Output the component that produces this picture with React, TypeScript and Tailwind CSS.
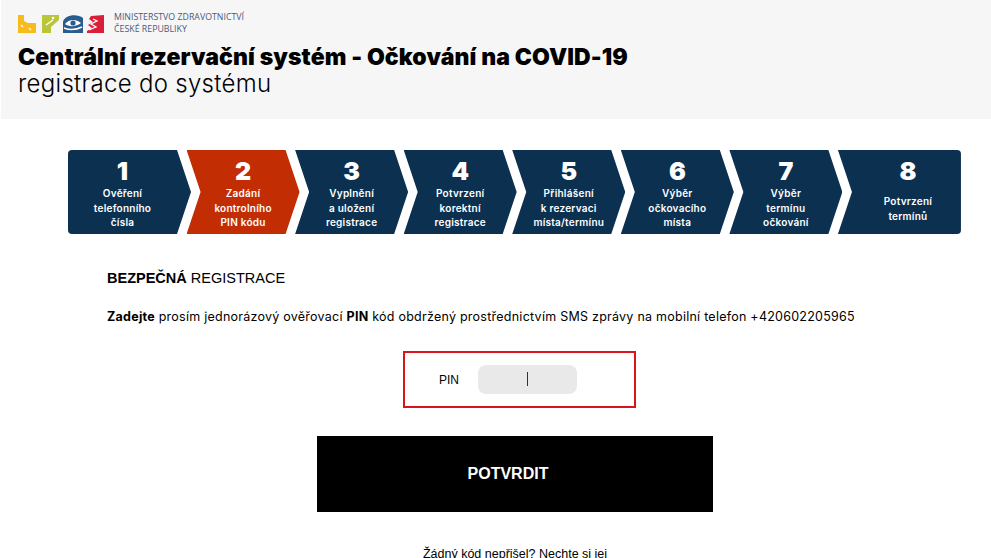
const steps = [
  { n: '1', lines: ['Ověření', 'telefonního', 'čísla'], first: true },
  { n: '2', lines: ['Zadání', 'kontrolního', 'PIN kódu'], active: true },
  { n: '3', lines: ['Vyplnění', 'a uložení', 'registrace'] },
  { n: '4', lines: ['Potvrzení', 'korektní', 'registrace'] },
  { n: '5', lines: ['Přihlášení', 'k rezervaci', 'místa/termínu'] },
  { n: '6', lines: ['Výběr', 'očkovacího', 'místa'] },
  { n: '7', lines: ['Výběr', 'termínu', 'očkování'] },
  { n: '8', lines: ['Potvrzení', 'termínů'], last: true },
];

function Logo() {
  return (
    <svg width="87" height="19" viewBox="0 0 87 19" className="shrink-0">
      <path d="M0 1h6v6l4 2h8v10H0z" fill="#f7bb1e" />
      <path d="M3 11l2 2M11 14l2 2" stroke="#fff" strokeWidth="1.2" />
      <path d="M24 1h17v5L33 13v6h-9z" fill="#b9c63a" />
      <path d="M28 11l7-5" stroke="#fff" strokeWidth="1.2" />
      <circle cx="35" cy="4" r="1.3" fill="#fff" />
      <path d="M45 8C46 1 59 -1 65 4v15H45z" fill="#2b5c8e" />
      <path d="M47 10c4-5 11-5 16-1-5 4-12 4-16 1z" fill="#fff" />
      <circle cx="55" cy="9" r="2.6" fill="#2b5c8e" />
      <path d="M46 14c5 2 12 2 18-1" stroke="#fff" strokeWidth="1.4" fill="none" />
      <path d="M73 2l13-1v18H69v-2l5-3-4-3 5-3-4-3z" fill="#dc1f38" />
      <path d="M71 16l7-3-5-3 6-3-4-2" stroke="#fff" strokeWidth="1.3" fill="none" />
    </svg>
  );
}

function Step({ n, lines, first, last, active }: { n: string; lines: string[]; first?: boolean; last?: boolean; active?: boolean }) {
  const shape = first
    ? 'w-[123px] rounded-l-[4px] [clip-path:polygon(0_0,109px_0,100%_50%,109px_100%,0_100%)] pr-[14px]'
    : last
      ? 'w-[123px] rounded-r-[4px] -ml-[4.45px] [clip-path:polygon(0_0,100%_0,100%_100%,0_100%,14px_50%)] pl-[17px]'
      : 'w-[113px] -ml-[4.45px] [clip-path:polygon(0_0,99px_0,100%_50%,99px_100%,0_100%,14px_50%)] pl-[14px] pr-[14px]';
  return (
    <div className={`h-[84px] shrink-0 flex flex-col items-center text-white ${active ? 'bg-[#c32d04]' : 'bg-[#0b3050]'} ${shape}`}>
      <div className="mt-[6px] text-[25px] leading-[30px] font-black">{n}</div>
      <div className={`text-[10px] leading-[14.5px] font-semibold text-center whitespace-nowrap tracking-[0.25px] ${last ? 'mt-[8px]' : 'mt-0'}`}>
        {lines.map((l) => (
          <div key={l}>{l}</div>
        ))}
      </div>
    </div>
  );
}

export default function App() {
  return (
    <div className="h-[558px] w-[991px] overflow-hidden bg-white font-['Inter',sans-serif] text-black">
      {/* Header */}
      <div className="ml-[1px] h-[119px] bg-[#f6f6f7] pl-[17px] pt-[11px]">
        <div className="flex items-center gap-[9px]">
          <Logo />
          <div className="text-[8.8px] leading-[12px] text-[#4a5a7a] font-['Open_Sans',sans-serif] whitespace-nowrap">
            <div>MINISTERSTVO ZDRAVOTNICTVÍ</div>
            <div>ČESKÉ REPUBLIKY</div>
          </div>
        </div>
        <h1 className="mt-[8px] text-[23px] leading-[28px] font-black tracking-[0.1px] whitespace-nowrap">
          Centrální rezervační systém - Očkování na COVID-19
        </h1>
        <p className="text-[24px] leading-[25px] font-light tracking-[0.3px]">registrace do systému</p>
      </div>

      {/* Steps */}
      <div className="mt-[31px] pl-[68px] flex">
        {steps.map((s) => (
          <Step key={s.n} {...s} />
        ))}
      </div>

      {/* Body */}
      <div className="pl-[107px] pt-[34px]">
        <h2 className="text-[14.5px] leading-[20px] font-['Liberation_Sans',sans-serif]">
          <span className="font-bold">BEZPEČNÁ</span> REGISTRACE
        </h2>
        <p className="mt-[19px] text-[12.5px] leading-[20px] whitespace-nowrap tracking-[0.25px]">
          <b>Zadejte</b> prosím jednorázový ověřovací <b>PIN</b> kód obdržený prostřednictvím SMS zprávy na mobilní telefon +420602205965
        </p>
      </div>

      <div className="mt-[24px] ml-[403px] w-[233px] h-[57px] border-2 border-[#d8141c] flex items-center pl-[34px]">
        <label className="w-[39px] text-[12px] font-['Liberation_Sans',sans-serif]">PIN</label>
        <div className="w-[99px] h-[29px] -mt-[1px] rounded-lg bg-[#e9e9e9] flex items-center justify-center">
          <div className="w-px h-[14px] bg-[#333]" />
        </div>
      </div>

      <button className="mt-[28px] ml-[317px] w-[396px] h-[76px] pr-[14px] bg-black text-white text-[16px] font-bold font-['Liberation_Sans',sans-serif] block">
        POTVRDIT
      </button>

      <p className="mt-[35px] ml-[317px] w-[396px] text-center text-[12.5px] leading-[14px] font-['Liberation_Sans',sans-serif]">
        Žádný kód nepřišel? Nechte si jej
      </p>
    </div>
  );
}
